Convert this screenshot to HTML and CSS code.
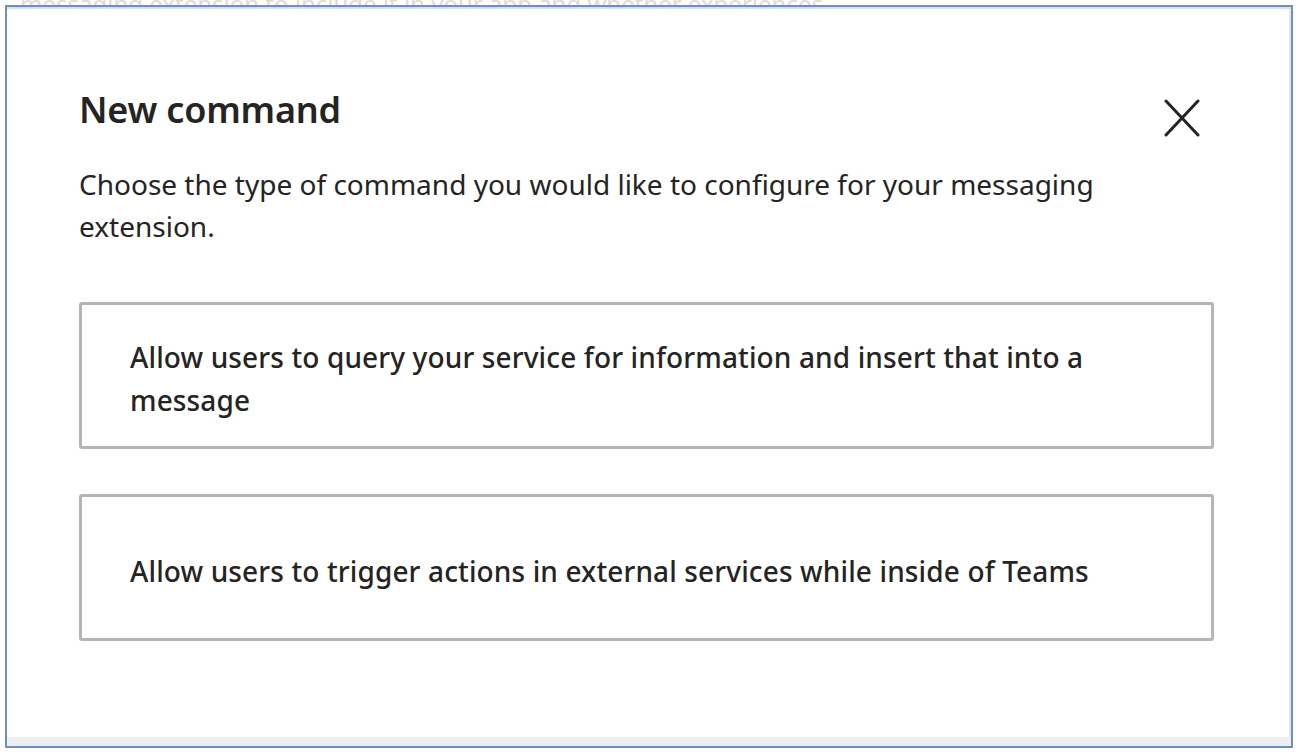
FILE: index.html
```html
<!DOCTYPE html>
<html>
<head>
<meta charset="utf-8">
<link rel="stylesheet" href="styles.css">
</head>
<body>
<div class="page">
  <div class="peek">messaging extension to include it in your app and whether experiences</div>
  <div class="frame">
    <div class="dialog">
      <div class="header">
        <h1 class="title">New command</h1>
        <button class="close" aria-label="Close">
          <svg width="36" height="38" viewBox="0 0 36 38"><path d="M2 2 L34 36 M34 2 L2 36" stroke="#252423" stroke-width="3" fill="none" stroke-linecap="round"/></svg>
        </button>
      </div>
      <p class="desc">Choose the type of command you would like to configure for your messaging extension.</p>
      <div class="options">
        <div class="option">Allow users to query your service for information and insert that into a message</div>
        <div class="option">Allow users to trigger actions in external services while inside of Teams</div>
      </div>
    </div>
    <div class="footer-strip"></div>
  </div>
</div>
</body>
</html>
```
FILE: styles.css
```css
html, body {
  margin: 0;
  padding: 0;
  background: #ffffff;
}
.page {
  width: 1300px;
  height: 755px;
  overflow: hidden;
  font-family: "Segoe UI", "Noto Sans", "Open Sans", sans-serif;
  color: #252423;
}
.peek {
  height: 5px;
  overflow: hidden;
  font-size: 24px;
  line-height: 8px;
  color: #dcdcdc;
  padding-left: 20px;
  white-space: nowrap;
}
.frame {
  margin-left: 5px;
  width: 1284px;
  height: 739px;
  border: 2px solid #6f8fc4;
  box-shadow: inset 0 2px 0 #dcdfe4, inset -2px 0 0 #e8eaee;
  display: flex;
  flex-direction: column;
  box-sizing: content-box;
}
.dialog {
  flex: 1;
  padding: 78px 77px 0 72px;
  display: flex;
  flex-direction: column;
}
.header {
  display: flex;
  justify-content: space-between;
  align-items: flex-start;
  height: 50px;
}
.title {
  margin: 0;
  font-size: 36px;
  font-weight: 600;
  line-height: 50px;
  letter-spacing: -0.2px;
}
.close {
  border: none;
  background: none;
  padding: 0;
  margin-top: 14px;
  margin-right: 14px;
  width: 36px;
  height: 38px;
  flex: none;
  cursor: pointer;
}
.close svg { display: block; }
.desc {
  margin: 28px 0 0 0;
  font-size: 28px;
  line-height: 42px;
  font-weight: 400;
  width: 1060px;
}
.options {
  margin-top: 55px;
  display: flex;
  flex-direction: column;
  gap: 45px;
}
.option {
  box-sizing: border-box;
  height: 147px;
  border: 3px solid #b5b5b5;
  border-radius: 3px;
  display: flex;
  align-items: center;
  padding: 7px 100px 0 48px;
  font-size: 28px;
  line-height: 43px;
  font-weight: 500;
  letter-spacing: 0.13px;
}
.footer-strip {
  height: 9px;
  background: #eceef1;
}
```
